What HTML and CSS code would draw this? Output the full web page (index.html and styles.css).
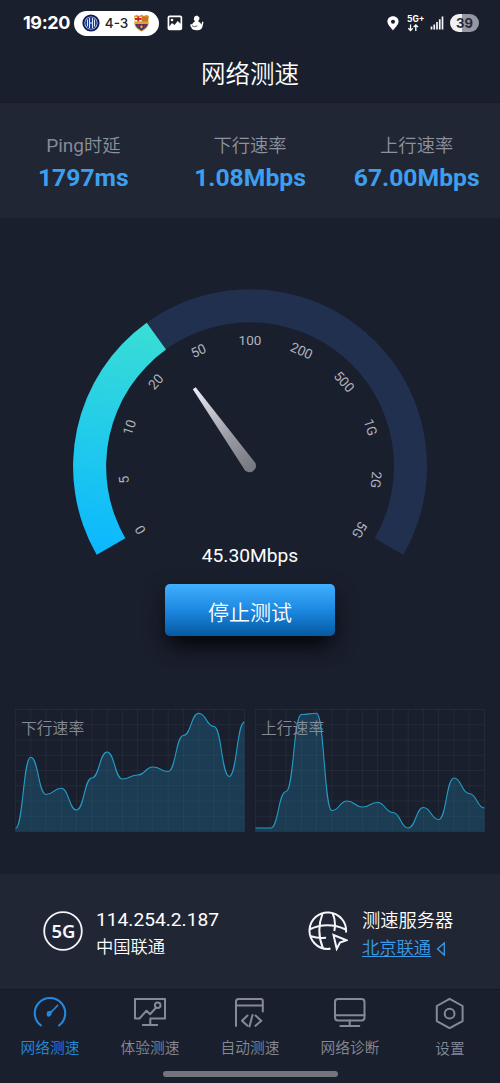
FILE: index.html
```html
<!DOCTYPE html>
<html lang="zh-CN">
<head>
<meta charset="utf-8">
<meta name="viewport" content="width=device-width, initial-scale=1">
<title>网络测速</title>
<link rel="stylesheet" href="styles.css">
</head>
<body>
<div class="app">
  <header class="status">
    <span class="clock">19:20</span>
    <div class="score">
      <svg width="18" height="18" viewBox="0 0 18 18"><circle cx="9" cy="9" r="8.6" fill="#101b50"/><circle cx="9" cy="9" r="6.600" fill="#c9d9f2"/><circle cx="9" cy="9" r="5.9" fill="#183c92"/><path d="M5.500 5.500v7M7.500 4v10M10.500 4v10M12.500 5.500v7M7.500 9h3" stroke="#dce8fa" stroke-width="1"/></svg>
      <span>4-3</span>
      <svg width="17" height="18" viewBox="0 0 17 18"><path d="M1 2l3-1.2 2 1.2 2.500-1.500L11 2l2.200-1.200L16 2l-.7 5q2 6-6.800 10.500Q-.3 13 1.700 7z" fill="#d7a632"/><path d="M2 3h6.500v4.500H2z" fill="#f4ece7"/><path d="M5.200 2.500v5M2 5h6.500" stroke="#da202c" stroke-width="1.8"/><path d="M10 2.500v5M12 2.500v5M14 2.500v5" stroke="#c93b28" stroke-width="1"/><path d="M2.200 10h12.600q-.8 3.600-6.300 6.500Q3 13.600 2.200 10z" fill="#263f83"/><path d="M5 10v4M8.500 10v6.500M12 10v4" stroke="#a32345" stroke-width="1.700"/><circle cx="8.500" cy="12.700" r="1.300" fill="#e4b92f"/></svg>
    </div>
    <svg class="photo" width="16" height="16" viewBox="0 0 16 16"><rect x=".6" y=".6" width="14.600" height="14.600" rx="2" fill="#fff"/><path d="M2.300 2.300h11.200v6.500L10.700 6 7.500 10 5 8l-2.700 3.500z" fill="#1b202e"/><circle cx="5" cy="5" r="1.300" fill="#fff"/></svg>
    <svg class="snow" width="14" height="16" viewBox="0 0 14 16"><path d="M4.500 1.500L7 .5l2.500 2-.3 2.200L8 6.200q3 1.100 3.300 3.500l1-3.200 1.200.4-1 4.600q-.6 3.600-5.200 3.800-5.400.2-6.200-3.200L.3 11l.4-2.200 1.300.6Q2.800 7.500 5 6.200L3.700 4.600z" fill="#fff"/><path d="M2 10.700q2.500 2 5.300.2" fill="none" stroke="#1b202e" stroke-width=".7"/></svg>
    <span class="grow"></span>
    <svg class="pin" width="12" height="15" viewBox="0 0 12 15"><path fill="#fff" fill-rule="evenodd" d="M6 .3C2.700.3.400 2.700.400 5.600.400 9 4.700 12.500 6 14.500 7.300 12.500 11.600 9 11.600 5.600 11.600 2.700 9.300.3 6 .3zM6 3.700a2 2 0 1 1 0 4 2 2 0 0 1 0-4z"/></svg>
    <div class="mobile"><span>5G+</span><svg width="13" height="8" viewBox="0 0 13 8"><path d="M3.500.5v6M1.300 4.300l2.200 2.300 2.200-2.300M8.800 7V1M6.600 3.100L8.800.9 11 3.100" fill="none" stroke="#fff" stroke-width="1.300"/></svg></div>
    <svg class="signal" width="14" height="14" viewBox="0 0 14 14"><path d="M1.500 13.500v-3M4.250 13.500V8.500M7 13.500V6M9.750 13.500V3.200M12.500 13.500V.5" stroke="#f5f6f8" stroke-width="1.700"/></svg>
    <div class="battery">39</div>
  </header>
  <h1 class="title">网络测速</h1>
  <section class="stats">
    <div class="stat"><div class="name"><span class="latin">Ping</span>时延</div><div class="value">1797ms</div></div>
    <div class="stat"><div class="name">下行速率</div><div class="value">1.08Mbps</div></div>
    <div class="stat"><div class="name">上行速率</div><div class="value">67.00Mbps</div></div>
  </section>
  <main class="meter">
    <svg class="dial" width="370" height="280" viewBox="65 282 370 280">
      <defs>
        <linearGradient id="speed" gradientUnits="userSpaceOnUse" x1="145" y1="325" x2="110" y2="554"><stop stop-color="#39ded5"/><stop offset="1" stop-color="#0bb8ff"/></linearGradient>
        <linearGradient id="needle" gradientUnits="userSpaceOnUse" x1="194" y1="388" x2="251" y2="468"><stop stop-color="#ececf7"/><stop offset=".6" stop-color="#9b9ca5"/><stop offset="1" stop-color="#777a83"/></linearGradient>
      </defs>
      <path d="M96.700 554.800A177 177 0 1 1 403.300 554.800L374.700 538.300A144 144 0 1 0 125.300 538.300z" fill="#22304f"/>
      <path d="M96.700 554.800A177 177 0 0 1 146.700 322.800L166 349.600A144 144 0 0 0 125.300 538.300z" fill="url(#speed)"/>
      <g class="ticks">
        <text transform="rotate(-120 250 466.500)" x="250" y="344.500">0</text>
        <text transform="rotate(-96 250 466.500)" x="250" y="344.500">5</text>
        <text transform="rotate(-72 250 466.500)" x="250" y="344.500">10</text>
        <text transform="rotate(-48 250 466.500)" x="250" y="344.500">20</text>
        <text transform="rotate(-24 250 466.500)" x="250" y="344.500">50</text>
        <text x="250" y="344.500">100</text>
        <text transform="rotate(24 250 466.500)" x="250" y="344.500">200</text>
        <text transform="rotate(48 250 466.500)" x="250" y="344.500">500</text>
        <text transform="rotate(72 250 466.500)" x="250" y="344.500">1G</text>
        <text transform="rotate(96 250 466.500)" x="250" y="344.500">2G</text>
        <text transform="rotate(120 250 466.500)" x="250" y="344.500">5G</text>
      </g>
      <path d="M192.800 389.300L195.700 387.300 255.200 462.800A6.400 6.400 0 0 1 244.900 470.200z" fill="url(#needle)"/>
      <text class="reading" x="250" y="562">45.30Mbps</text>
    </svg>
    <button class="stop">停止测试</button>
  </main>
  <section class="charts">
    <div class="chart"><svg id="down" width="230" height="123" viewBox="0 0 230 123"></svg><span>下行速率</span></div>
    <div class="chart"><svg id="up" width="230" height="123" viewBox="0 0 230 123"></svg><span>上行速率</span></div>
  </section>
  <section class="info">
    <div class="network">
      <svg width="40" height="40" viewBox="0 0 40 40"><circle cx="20" cy="20" r="18.800" fill="none" stroke="#f4f6fa" stroke-width="1.800"/><text class="badge" x="20.500" y="26.500">5G</text></svg>
      <div class="lines"><div class="ip">114.254.2.187</div><div class="carrier">中国联通</div></div>
    </div>
    <div class="server">
      <svg width="40" height="40" viewBox="0 0 40 40" fill="none" stroke="#f4f6fa" stroke-width="2"><path d="M22.500 37.500Q20.900 38 19.500 38A18.300 18.300 0 1 1 38 21.500M1.300 18.500q18-8.500 36.500 0M2 25q8 2.500 16 1.800M14.700 2Q7.800 20 15 37.300M24.500 2Q28.300 10 26.300 20"/><path d="M25.500 24l13 5.200-6.500 2.400-3.300 6.200z" stroke-linejoin="miter"/></svg>
      <div class="lines"><div class="server-name">测速服务器</div><div class="pick"><a>北京联通</a><svg width="10" height="16" viewBox="0 0 10 16"><path d="M8.300 2v12L1.500 8z" fill="none" stroke="#3a9be8" stroke-width="1.300"/></svg></div></div>
    </div>
  </section>
  <nav class="tabs">
    <div class="tab active"><svg width="36" height="32" viewBox="0 0 36 32"><path d="M9 28.500A15.200 15.200 0 1 1 27 28.500" stroke-width="2.100"/><path d="M17.500 17l8-8.500" stroke-width="1.800"/><path d="M15.200 14.400l5-.8-1 4.500q-1 2-3.500 1.600-1.700-1.600-.5-5.300z" fill="currentColor" stroke="none"/></svg><span>网络测速</span></div>
    <div class="tab"><svg width="36" height="32" viewBox="0 0 36 32"><path d="M4.500 21.500H3V2h30v19.500H18.300v6M10.800 28h14.400M4 21.500h3.500l7-7.800 3.500 3.500 6-6.400"/><circle cx="25.700" cy="8.300" r="2.800"/></svg><span>体验测速</span></div>
    <div class="tab"><svg width="36" height="32" viewBox="0 0 36 32"><path d="M4 29V4.500Q4 2 6.500 2h22.300q2 0 2 2v10.500M4 8.500h26.500M15.500 18.500l-5.500 5.300 5.500 5M20.500 18l-3 11.500M23.500 18.500l5.800 5.300-5.800 5"/></svg><span>自动测速</span></div>
    <div class="tab"><svg width="36" height="32" viewBox="0 0 36 32"><rect x="3" y="2" width="29.500" height="21.500" rx="3"/><path d="M3 18.200h29.500M17.700 23.500v5M8.300 29h19"/></svg><span>网络诊断</span></div>
    <div class="tab"><svg width="36" height="32" viewBox="0 0 36 32"><path d="M17.600 1.800l13 7.200v15.200l-13 7-12.800-7V9z"/><circle cx="17.600" cy="16.700" r="4.900"/></svg><span class="low">设置</span></div>
    <div class="home"></div>
  </nav>
</div>
<script src="charts.js"></script>
</body>
</html>
```

FILE: charts.js
```js
function drawChart(id, values) {
  const left = 0.5, bottom = 122.5, width = 229, step = width / 15;
  let grid = "";
  for (let i = 0; i <= 15; i++) grid += `M${left + i * step} .5V${bottom}`;
  for (let i = 0; i <= 8; i++) grid += `M${left} ${0.5 + i * 15.25}H${left + width}`;
  let line = `M${left} ${values[0]}`;
  for (let i = 1; i < values.length; i++) {
    const x = left + i * step, mid = x - step / 2;
    line += `C${mid} ${values[i - 1]} ${mid} ${values[i]} ${x} ${values[i]}`;
  }
  document.getElementById(id).innerHTML =
    `<path class="area" d="${line}V${bottom}H${left}Z"/><path class="grid" d="${grid}"/><path class="line" d="${line}"/>`;
}
drawChart("down", [119.5, 48.3, 85.5, 79.3, 101, 69, 43, 70, 66, 58, 62.5, 26.5, 4.3, 17.5, 67.5, 13]);
drawChart("up", [119, 119, 82.5, 5.5, 4.3, 101.5, 92, 98, 93.5, 103.5, 119, 98.5, 110.5, 69, 84.5, 99]);
```

FILE: styles.css
```css
* { box-sizing: border-box; }
body { margin: 0; background: #1a1f2d; font-family: Roboto, "Noto Sans CJK SC", sans-serif; color: #fff; }
.app { width: 500px; height: 1083px; display: flex; flex-direction: column; overflow: hidden; }
svg { display: block; flex: none; }
.status { height: 46px; display: flex; align-items: center; padding: 0 21px 0 23px; }
.clock { width: 51px; font: 700 18px/46px Inter, sans-serif; letter-spacing: -.4px; white-space: nowrap; }
.score { width: 85px; height: 25px; border-radius: 13px; background: #fff; color: #20232c; display: flex; align-items: center; justify-content: space-between; padding: 0 9px 0 8px; font: 500 13.5px Inter, sans-serif; }
.photo { margin-left: 8px; }
.snow { margin-left: 7px; }
.grow { flex: 1; }
.pin { margin-right: 8px; }
.mobile { width: 19px; font: 700 8.5px/9px Inter, sans-serif; margin-right: 4px; white-space: nowrap; }
.signal { margin-right: 6px; }
.battery { width: 29px; height: 18px; border-radius: 9px; background: linear-gradient(90deg, #f0f1f4 0 40%, #9597a2 40%); color: #252936; text-align: center; font: 700 13px/18px Inter, sans-serif; }
.title { height: 57px; margin: 0; padding-top: 1px; border-bottom: 1px solid #171b27; font-size: 24.500px; line-height: 55px; font-weight: 350; text-align: center; }
.stats { height: 115px; padding-top: 29px; background: #212634; display: grid; grid-template-columns: repeat(3, 1fr); text-align: center; }
.name { color: #8d929e; font-size: 18.300px; line-height: 28px; height: 28px; font-weight: 350; }
.latin { font-size: 19px; font-weight: 400; color: #858a97; }
.value { color: #3c9ff0; font-size: 24.700px; line-height: 35px; font-weight: 700; }
.meter { height: 491px; padding-top: 64px; display: flex; flex-direction: column; align-items: center; }
.dial { overflow: visible; }
.ticks text { fill: #b0b3bd; font-size: 13.500px; text-anchor: middle; }
.reading { fill: #fff; font-size: 19.200px; text-anchor: middle; }
.stop { margin-top: 22px; width: 170px; height: 52px; border: 0; border-radius: 5px; background: linear-gradient(#40b0ff, #1c86df 52%, #0559a0); color: #fff; font: 350 21px/52px Roboto, "Noto Sans CJK SC", sans-serif; padding: 3px 0 0; box-shadow: 0 16px 20px -9px #05060b, 0 8px 20px #10131d; }
.charts { height: 165px; padding: 0 15px; display: flex; gap: 10px; }
.chart { position: relative; width: 230px; height: 123px; }
.chart span { position: absolute; left: 6px; top: 7px; color: #858b98; font-family: "Noto Sans CJK SC", sans-serif; font-size: 15.800px; line-height: 24px; font-weight: 350; }
.area { fill: #1b3c52; }
.grid { stroke: #728ba6; stroke-opacity: .1; fill: none; stroke-width: 1; }
.line { stroke: #249bc5; fill: none; stroke-width: 1.1; }
.info { height: 115px; background: #212634; display: grid; grid-template-columns: 265px 1fr; }
.network, .server { display: flex; padding: 32px 0 0 43px; }
.info > div > svg { margin-top: 5px; }
.badge { font: 600 18.500px "Noto Sans", sans-serif; fill: #f4f6fa; text-anchor: middle; }
.lines { margin-left: 13px; white-space: nowrap; }
.server .lines { margin-left: 14px; }
.ip { font-size: 19.200px; line-height: 28px; }
.carrier { font-size: 17.300px; line-height: 26px; font-weight: 350; }
.server-name { font-size: 18.300px; line-height: 29px; font-weight: 350; }
.pick { display: flex; align-items: center; color: #3a9be8; font-size: 17.300px; line-height: 27px; font-weight: 350; }
.pick a { text-decoration: underline; text-decoration-thickness: 1px; text-underline-offset: 2px; }
.pick svg { margin-left: 5px; }
.tabs { position: relative; height: 94px; border-top: 1px solid #151925; display: grid; grid-template-columns: repeat(5, 1fr); }
.tab { display: flex; flex-direction: column; align-items: center; padding-top: 7px; color: #858a97; font-family: "Noto Sans CJK SC", sans-serif; font-size: 14.700px; font-weight: 350; }
.tab svg { fill: none; stroke: currentColor; stroke-width: 2; stroke-linejoin: round; stroke-linecap: round; }
.tab span { margin-top: 7px; line-height: 22px; }
.tab .low { margin-top: 8px; }
.active { color: #2389dc; }
.home { position: absolute; left: 162.500px; top: 81px; width: 175px; height: 6px; border-radius: 3px; background: #73757d; }
```
